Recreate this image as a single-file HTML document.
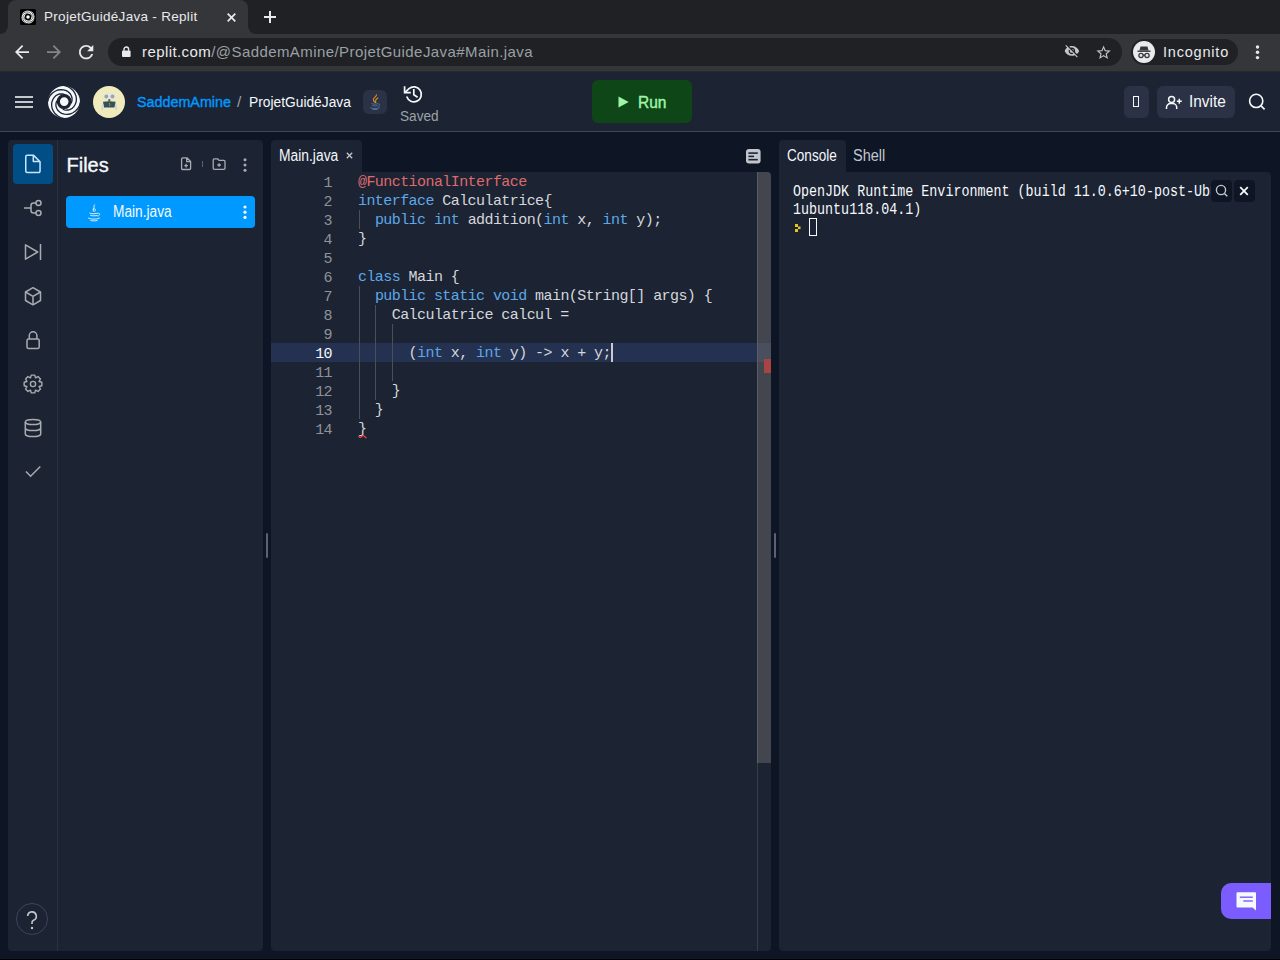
<!DOCTYPE html>
<html><head><meta charset="utf-8">
<style>
*{box-sizing:border-box;margin:0;padding:0}
html,body{width:1280px;height:960px;overflow:hidden;background:#000;font-family:"Liberation Sans",sans-serif}
.abs{position:absolute}
svg{position:absolute;overflow:visible}
.t{position:absolute;white-space:pre;line-height:1}
#chrome{position:absolute;left:0;top:0;width:1280px;height:71px;background:#202124}
#tab{position:absolute;left:8px;top:0;width:240px;height:34px;background:#35363a;border-radius:8px 8px 0 0}
#toolbar{position:absolute;left:0;top:34px;width:1280px;height:37px;background:#35363a}
#page{position:absolute;left:0;top:71px;width:1280px;height:888px;background:#0e1525}
#header{position:absolute;left:0;top:0;width:1280px;height:61px;background:#1c2333;border-bottom:1px solid #3c445c}
.panel{position:absolute;background:#1c2333;border-radius:4px;overflow:hidden}
.code{font-family:"Liberation Mono",monospace;font-size:14px}
#nums,#code{font-family:"Liberation Mono",monospace;font-size:15px;letter-spacing:-0.57px;line-height:19px;white-space:pre}
#nums{color:#8f9398}
#nums .act{color:#f5f9fc}
.ln{height:19px}
.an{color:#dd6b6b}.kw{color:#5ca8e8}.id{color:#d4d7db}
</style></head><body>
<div id="chrome">
  <div id="tab"></div>
  <!-- flares -->
  <svg style="left:0;top:26px" width="8" height="8"><path d="M0 8 H8 V0 A8 8 0 0 1 0 8Z" fill="#35363a"/></svg>
  <svg style="left:248px;top:26px" width="8" height="8"><path d="M0 0 V8 H8 A8 8 0 0 1 0 0Z" fill="#35363a"/></svg>
  <!-- favicon -->
  <svg style="left:20px;top:9px" width="16" height="16" viewBox="0 0 16 16"><rect width="16" height="16" rx="1.5" fill="#000"/><circle cx="8" cy="8" r="6.6" fill="#fff"/><circle cx="8" cy="7.9" r="2.5" fill="none" stroke="#000" stroke-width="1.5"/><path d="M1.20 8.00 1.76 6.23 2.75 4.76 4.05 3.69 5.52 3.06 7.02 2.88 8.43 3.12 9.63 3.72 10.55 4.58 11.13 5.60 11.38 6.66 11.30 7.66 10.95 8.52" fill="none" stroke="#000" stroke-width="0.6"/><path d="M8.00 1.20 9.77 1.76 11.24 2.75 12.31 4.05 12.94 5.52 13.12 7.02 12.88 8.43 12.28 9.63 11.42 10.55 10.40 11.13 9.34 11.38 8.34 11.30 7.48 10.95" fill="none" stroke="#000" stroke-width="0.6"/><path d="M14.80 8.00 14.24 9.77 13.25 11.24 11.95 12.31 10.48 12.94 8.98 13.12 7.57 12.88 6.37 12.28 5.45 11.42 4.87 10.40 4.62 9.34 4.70 8.34 5.05 7.48" fill="none" stroke="#000" stroke-width="0.6"/><path d="M8.00 14.80 6.23 14.24 4.76 13.25 3.69 11.95 3.06 10.48 2.88 8.98 3.12 7.57 3.72 6.37 4.58 5.45 5.60 4.87 6.66 4.62 7.66 4.70 8.52 5.05" fill="none" stroke="#000" stroke-width="0.6"/></svg>
  <div class="t" style="left:44px;top:10px;font-size:13.5px;color:#e8eaed;letter-spacing:0.3px">ProjetGuidéJava - Replit</div>
  <svg style="left:227px;top:12.5px" width="9" height="9" viewBox="0 0 9 9"><path d="M0.7 0.7 L8.3 8.3 M8.3 0.7 L0.7 8.3" stroke="#e8eaed" stroke-width="1.7"/></svg>
  <svg style="left:264px;top:11px" width="12" height="12" viewBox="0 0 12 12"><path d="M6 0 V12 M0 6 H12" stroke="#e8eaed" stroke-width="2"/></svg>
  <div id="toolbar">
    <!-- back -->
    <svg style="left:15px;top:11px" width="14" height="14" viewBox="0 0 16 16"><path d="M16 7H3.83l5.59-5.59L8 0 0 8l8 8 1.41-1.41L3.83 9H16z" fill="#e8eaed"/></svg>
    <svg style="left:47px;top:11px" width="14" height="14" viewBox="0 0 16 16"><path d="M0 7h12.17L6.58 1.41 8 0l8 8-8 8-1.41-1.41L12.17 9H0z" fill="#80868b"/></svg>
    <svg style="left:79px;top:10.8px" width="14.3" height="14.3" viewBox="4 4 16 16"><path d="M17.65 6.35A7.958 7.958 0 0 0 12 4c-4.42 0-7.99 3.58-7.99 8s3.57 8 7.990 8c3.73 0 6.84-2.55 7.73-6h-2.08A5.990 5.990 0 0 1 12 18c-3.31 0-6-2.69-6-6s2.69-6 6-6c1.66 0 3.14.69 4.22 1.78L13 11h7V4l-2.35 2.35z" fill="#e8eaed"/></svg>
    <div class="abs" style="left:108px;top:4px;width:1014px;height:28px;border-radius:14px;background:#202124"></div>
    <!-- lock -->
    <svg style="left:121.7px;top:12px" width="9" height="11" viewBox="0 0 9 11"><rect x="0" y="4.4" width="8.6" height="6.6" rx="1" fill="#e8eaed"/><path d="M2 4.8 V3.3 A2.3 2.3 0 0 1 6.6 3.3 V4.8" fill="none" stroke="#e8eaed" stroke-width="1.4"/></svg>
    <div class="t" style="left:142px;top:10px;font-size:15px;color:#9aa0a6;letter-spacing:0.42px"><span style="color:#e8eaed">replit.com</span>/@SaddemAmine/ProjetGuideJava#Main.java</div>
    <!-- eye slash -->
    <svg style="left:1064px;top:9.2px" width="15.8" height="15.8" viewBox="0 0 24 24"><path d="M12 7c2.76 0 5 2.24 5 5 0 .65-.13 1.26-.36 1.83l2.92 2.92c1.51-1.26 2.7-2.89 3.43-4.75-1.73-4.39-6-7.5-11-7.5-1.4 0-2.74.25-3.98.7l2.16 2.16C10.74 7.13 11.35 7 12 7zM2 4.27l2.28 2.28.46.46C3.08 8.3 1.780 10.02 1 12c1.73 4.39 6 7.5 11 7.5 1.55 0 3.03-.3 4.38-.84l.42.42L19.730 22 21 20.73 3.27 3 2 4.27zM7.53 9.8l1.55 1.55c-.05.21-.08.43-.08.65 0 1.66 1.34 3 3 3 .22 0 .44-.03.65-.08l1.55 1.55c-.67.33-1.41.53-2.2.53-2.76 0-5-2.24-5-5 0-.79.2-1.53.53-2.2zm4.31-.78l3.15 3.15.02-.16c0-1.66-1.34-3-3-3l-.17.01z" fill="#c4c7c5"/></svg>
    <!-- star -->
    <svg style="left:1095.4px;top:9.5px" width="17.2" height="17.2" viewBox="0 0 24 24"><path d="M22 9.24l-7.19-.62L12 2 9.19 8.63 2 9.24l5.46 4.73L5.82 21 12 17.27 18.18 21l-1.63-7.03L22 9.24zM12 15.4l-3.76 2.27 1-4.28-3.32-2.88 4.38-.38L12 6.1l1.710 4.04 4.38.38-3.32 2.88 1 4.28L12 15.4z" fill="#c4c7c5"/></svg>
    <div class="abs" style="left:1131px;top:5px;width:107px;height:26px;border-radius:13px;background:#202124"></div>
    <svg style="left:1133px;top:7px" width="22" height="22" viewBox="0 0 22 22"><circle cx="11" cy="11" r="11" fill="#e8eaed"/><path d="M7.5 5.5 H14.5 L15.5 9.5 H6.5Z" fill="#35363a"/><rect x="4.5" y="9.5" width="13" height="1.4" fill="#35363a"/><circle cx="8" cy="14.5" r="2.1" fill="none" stroke="#35363a" stroke-width="1.3"/><circle cx="14" cy="14.5" r="2.1" fill="none" stroke="#35363a" stroke-width="1.3"/><path d="M10 14.2 H12" stroke="#35363a" stroke-width="1.2"/></svg>
    <div class="t" style="left:1163px;top:10.8px;font-size:14.5px;color:#e8eaed;letter-spacing:0.8px">Incognito</div>
    <svg style="left:1255px;top:11px" width="5" height="15" viewBox="0 0 5 15"><circle cx="2.5" cy="2" r="1.7" fill="#e8eaed"/><circle cx="2.5" cy="7.3" r="1.7" fill="#e8eaed"/><circle cx="2.5" cy="12.6" r="1.7" fill="#e8eaed"/></svg>
  </div>
</div>
<div id="page"></div>
<div class="abs" style="left:0;top:71px;width:1280px;height:61px;background:#1c2333;border-bottom:1px solid #3c445c"></div>
<div class="abs" style="left:0;top:71px;width:1280px;height:1px;background:#27282c"></div>
<!-- HEADER -->
<svg style="left:15px;top:96px" width="18" height="12"><rect y="0" width="18" height="2" fill="#c2c8cc"/><rect y="5" width="18" height="2" fill="#c2c8cc"/><rect y="10" width="18" height="2" fill="#c2c8cc"/></svg>
<svg style="left:48px;top:86px" width="32" height="32" viewBox="0 0 32 32"><circle cx="16" cy="16" r="16" fill="#f5f9fc"/><circle cx="16.2" cy="15.6" r="5.9" fill="none" stroke="#1c2333" stroke-width="3.2"/><path d="M-0.5 16.0 0.5 12.5 2.2 9.5 4.5 7.0 7.1 5.2 10.0 4.0 12.9 3.6 15.7 3.8 18.3 4.7 20.4 6.0 22.2 7.7 23.3 9.7 24.0 11.7 24.1 13.8 23.8 15.6 23.1 17.3" fill="none" stroke="#1c2333" stroke-width="1.3"/><path d="M16.0 -0.5 19.5 0.5 22.5 2.2 25.0 4.5 26.8 7.1 28.0 10.0 28.4 12.9 28.2 15.7 27.3 18.3 26.0 20.4 24.3 22.2 22.3 23.3 20.3 24.0 18.2 24.1 16.4 23.8 14.7 23.1" fill="none" stroke="#1c2333" stroke-width="1.3"/><path d="M32.5 16.0 31.5 19.5 29.8 22.5 27.5 25.0 24.9 26.8 22.0 28.0 19.1 28.4 16.3 28.2 13.7 27.3 11.6 26.0 9.8 24.3 8.7 22.3 8.0 20.3 7.9 18.2 8.2 16.4 8.9 14.7" fill="none" stroke="#1c2333" stroke-width="1.3"/><path d="M16.0 32.5 12.5 31.5 9.5 29.8 7.0 27.5 5.2 24.9 4.0 22.0 3.6 19.1 3.8 16.3 4.7 13.7 6.0 11.6 7.7 9.8 9.7 8.7 11.7 8.0 13.8 7.9 15.6 8.2 17.3 8.9" fill="none" stroke="#1c2333" stroke-width="1.3"/></svg>
<svg style="left:93px;top:86px" width="32" height="32" viewBox="0 0 32 32">
  <circle cx="16" cy="16" r="16" fill="#efebbd"/>
  <rect x="10.2" y="7.6" width="12.4" height="5.8" rx="2.9" fill="#e3e6e6"/>
  <circle cx="13.3" cy="10.5" r="1.9" fill="#9ea3a6"/><circle cx="19.5" cy="10.5" r="1.9" fill="#9ea3a6"/>
  <path d="M10 15.8 Q16 14.8 22.6 15.8 L21.5 21.4 H11Z" fill="#34505f"/>
  <rect x="15.3" y="13.2" width="2" height="2.5" fill="#5c5848"/>
  <path d="M16.2 17 Q17.8 18.5 16.2 20" fill="none" stroke="#b8a030" stroke-width="0.9"/>
  <path d="M9.8 18.5 L9.2 24 M22.8 18.5 L23.3 24" stroke="#cfd5cf" stroke-width="1.8"/>
</svg>
<div class="t" style="left:137px;top:94.4px;font-size:15.5px;color:#0099ff;transform:scaleX(0.924);transform-origin:0 0;-webkit-text-stroke:0.4px #0099ff">SaddemAmine</div>
<div class="t" style="left:237px;top:94.4px;font-size:15.5px;color:#9da2a6">/</div>
<div class="t" style="left:248.5px;top:94.4px;font-size:15.5px;color:#f5f9fc;transform:scaleX(0.889);transform-origin:0 0">ProjetGuidéJava</div>
<div class="abs" style="left:363px;top:90px;width:24px;height:24px;border-radius:6px;background:#2b3245"></div>
<svg style="left:363px;top:90px" width="24" height="24" viewBox="0 0 24 24">
  <path d="M13.4 4.8 C13.8 6.5 10.2 7.6 10.3 9.8 C10.4 11 11.3 11.8 11.9 12.3 M14.8 8 C13.2 9 12.4 9.8 12.6 11 C12.7 11.6 12.9 12 12.8 12.5" fill="none" stroke="#e8961e" stroke-width="1.05" stroke-linecap="round"/>
  <path d="M8.6 13.6 C10 14.3 13.5 14.3 15 13.6 M9.2 15.5 C10.5 16 13 16 14.4 15.5 M7.2 17.6 C9.5 18.9 14.5 18.9 16.8 17.6 M15.4 13.8 C17.2 13.8 17 15.8 14.8 16.6 M9.5 19.4 C11 19.8 13 19.8 14.5 19.4" fill="none" stroke="#4f80ab" stroke-width="0.85"/>
</svg>
<svg style="left:400px;top:82px" width="26" height="24" viewBox="0 0 26 24">
  <path d="M6.7 14.6 A7.5 7.5 0 1 0 9 6.6 L4.8 10.6" fill="none" stroke="#f5f9fc" stroke-width="1.7"/>
  <path d="M4.6 4.2 V10.6 H10.8" fill="none" stroke="#f5f9fc" stroke-width="1.7"/>
  <path d="M13.8 7 V12.7 L17.6 15.2" fill="none" stroke="#f5f9fc" stroke-width="1.7"/>
</svg>
<div class="t" style="left:399.7px;top:107.9px;font-size:15.5px;color:#9da2a6;transform:scaleX(0.878);transform-origin:0 0">Saved</div>
<div class="abs" style="left:592px;top:80px;width:100px;height:43px;border-radius:6px;background:#0e4618"></div>
<svg style="left:617.5px;top:96px" width="11" height="12" viewBox="0 0 11 12"><path d="M0.5 0.5 L10.7 6 L0.5 11.5Z" fill="#9cf6a5"/></svg>
<div class="t" style="left:638px;top:94.4px;font-size:16.5px;color:#9cf6a5;transform:scaleX(0.94);transform-origin:0 0;-webkit-text-stroke:0.45px #9cf6a5">Run</div>
<div class="abs" style="left:1124px;top:86px;width:25px;height:32px;border-radius:6px;background:#2b3245"></div>
<div class="abs" style="left:1133px;top:96px;width:6px;height:11px;border:1.2px solid #f5f9fc"></div>
<div class="abs" style="left:1157px;top:86px;width:78px;height:32px;border-radius:6px;background:#2b3245"></div>
<svg style="left:1165px;top:95px" width="18" height="15" viewBox="0 0 18 15">
  <circle cx="6.6" cy="4.6" r="3" fill="none" stroke="#f5f9fc" stroke-width="1.5"/>
  <path d="M1.5 14 V12.5 A4 4 0 0 1 5.5 8.5 H7.7 A4 4 0 0 1 11.7 12.5 V14" fill="none" stroke="#f5f9fc" stroke-width="1.5"/>
  <path d="M14.3 3.8 V8.8 M11.8 6.3 H16.8" stroke="#f5f9fc" stroke-width="1.5"/>
</svg>
<div class="t" style="left:1188.7px;top:93.8px;font-size:15.6px;color:#f5f9fc;transform:scaleX(0.986);transform-origin:0 0">Invite</div>
<svg style="left:1248px;top:93px" width="18" height="18" viewBox="0 0 18 18"><circle cx="8.2" cy="7.9" r="6.6" fill="none" stroke="#f5f9fc" stroke-width="1.6"/><path d="M12.8 12.6 L16.6 16.4" stroke="#f5f9fc" stroke-width="1.6"/></svg>
<!-- SIDEBAR + FILES -->
<div class="panel" style="left:8px;top:140px;width:255px;height:811px"></div>
<div class="abs" style="left:57px;top:140px;width:1px;height:811px;background:#2b3245"></div>
<div class="abs" style="left:13px;top:144px;width:40px;height:40px;border-radius:4px;background:#004e85"></div>
<svg style="left:13px;top:144px" width="40" height="40" viewBox="0 0 40 40"><path d="M12.75 12.9 A1.55 1.55 0 0 1 14.3 11.35 H20.6 L27.05 17.8 V27 A1.55 1.55 0 0 1 25.5 28.55 H14.3 A1.55 1.55 0 0 1 12.75 27Z M20.3 11.8 V17.4 H26.6" fill="none" stroke="#c9e6ff" stroke-width="1.5" stroke-linejoin="round"/></svg>
<svg style="left:13px;top:188px" width="40" height="40" viewBox="0 0 40 40" fill="none" stroke="#a8acb0" stroke-width="1.5"><path d="M11 20 H18"/><path d="M23 15 H20.5 A2.5 2.5 0 0 0 18 17.5 V22.5 A2.5 2.5 0 0 0 20.5 25 H23"/><circle cx="25.5" cy="15" r="2.5"/><circle cx="25.5" cy="25" r="2.5"/></svg>
<svg style="left:13px;top:232px" width="40" height="40" viewBox="0 0 40 40" fill="none" stroke="#a8acb0" stroke-width="1.5" stroke-linejoin="round"><path d="M12.5 12.8 V27.2 L24.7 20Z"/><path d="M27.5 12 V28"/></svg>
<svg style="left:13px;top:276px" width="40" height="40" viewBox="0 0 40 40" fill="none" stroke="#a8acb0" stroke-width="1.5" stroke-linejoin="round"><path d="M20 11.7 L27.5 16 V24.5 L20 28.8 L12.5 24.5 V16Z"/><path d="M12.5 16 L20 20.3 L27.5 16 M20 20.3 V28.8"/></svg>
<svg style="left:13px;top:320px" width="40" height="40" viewBox="0 0 40 40" fill="none" stroke="#a8acb0" stroke-width="1.5"><rect x="14" y="19" width="12.2" height="9.6" rx="1.6"/><path d="M16.3 19 V15.6 A3.8 3.8 0 0 1 23.9 15.6 V19"/></svg>
<svg style="left:13px;top:364px" width="40" height="40" viewBox="0 0 40 40" fill="none" stroke="#a8acb0" stroke-width="1.4" stroke-linejoin="round"><path id="gear" d="M17.53 13.88 L18.28 11.17 L21.72 11.17 L22.47 13.88 L22.58 13.92 L25.03 12.54 L27.46 14.97 L26.08 17.42 L26.12 17.53 L28.83 18.28 L28.83 21.72 L26.12 22.47 L26.08 22.58 L27.46 25.03 L25.03 27.46 L22.58 26.08 L22.47 26.12 L21.72 28.83 L18.28 28.83 L17.53 26.12 L17.42 26.08 L14.97 27.46 L12.54 25.03 L13.92 22.58 L13.88 22.47 L11.17 21.72 L11.17 18.28 L13.88 17.53 L13.92 17.42 L12.54 14.97 L14.97 12.54 L17.42 13.92Z"/><circle cx="20" cy="20" r="2.6"/></svg>
<svg style="left:13px;top:408px" width="40" height="40" viewBox="0 0 40 40" fill="none" stroke="#a8acb0" stroke-width="1.5"><ellipse cx="20" cy="14" rx="7.7" ry="2.6"/><path d="M12.3 14 V26 A7.7 2.6 0 0 0 27.7 26 V14 M12.3 20 A7.7 2.6 0 0 0 27.7 20"/></svg>
<svg style="left:13px;top:452px" width="40" height="40" viewBox="0 0 40 40" fill="none" stroke="#a8acb0" stroke-width="1.5"><path d="M13 19.5 L17.6 24.2 L27.3 14.5"/></svg>
<div class="abs" style="left:16px;top:903px;width:32px;height:32px;border-radius:50%;border:1px solid #3c445c"></div>
<svg style="left:16px;top:903px" width="32" height="32" viewBox="0 0 32 32"><path d="M11.7 13 A4.3 4.3 0 1 1 17.5 17.2 C16.5 17.7 16 18.4 16 19.5 V21" fill="none" stroke="#c2c8cc" stroke-width="1.6"/><circle cx="16" cy="25" r="1.2" fill="#c2c8cc"/></svg>

<div class="t" style="left:66.5px;top:154.8px;font-size:20px;color:#f5f9fc;-webkit-text-stroke:0.35px #f5f9fc">Files</div>
<svg style="left:178px;top:155px" width="16" height="18" viewBox="0 0 16 18" fill="none" stroke="#a8acb0" stroke-width="1.3" stroke-linejoin="round"><path d="M3.6 3.9 A1.1 1.1 0 0 1 4.7 2.8 H8.9 L12.6 6.5 V13.4 A1.1 1.1 0 0 1 11.5 14.5 H4.7 A1.1 1.1 0 0 1 3.6 13.4Z M8.7 3 V6.7 H12.4"/><path d="M8.1 8.8 V12.4 M6.3 10.6 H9.9" stroke-width="1.3"/></svg>
<div class="abs" style="left:202px;top:161px;width:1px;height:6px;background:#5c6170"></div>
<svg style="left:210px;top:155px" width="18" height="18" viewBox="0 0 18 18" fill="none" stroke="#a8acb0" stroke-width="1.3" stroke-linejoin="round"><path d="M3.2 4.9 A1.1 1.1 0 0 1 4.3 3.8 H7.6 L9 5.4 H13.9 A1.1 1.1 0 0 1 15 6.5 V13.25 A1.1 1.1 0 0 1 13.9 14.35 H4.3 A1.1 1.1 0 0 1 3.2 13.25Z"/><path d="M9.1 8.2 V11.8 M7.3 10 H10.9" stroke-width="1.3"/></svg>
<svg style="left:242px;top:157px" width="6" height="16" viewBox="0 0 6 16"><circle cx="3" cy="2.7" r="1.5" fill="#a8acb0"/><circle cx="3" cy="8" r="1.5" fill="#a8acb0"/><circle cx="3" cy="13.3" r="1.5" fill="#a8acb0"/></svg>

<div class="abs" style="left:66px;top:196px;width:189px;height:32px;border-radius:4px;background:#0099ff"></div>
<svg style="left:86px;top:203px" width="16" height="19" viewBox="0 0 16 19" fill="none" stroke="#f5f9fc" stroke-width="0.9">
  <path d="M8.8 1.5 C6.5 3.5 9.5 4.5 7.4 7.4 M8 5 C6.2 6.3 7.8 7.3 7.3 8.6 M9.8 6 C8.8 7 9.6 7.8 8.5 8.8"/>
  <path d="M3.5 10 C5 11 10.5 11 12 10 M4.2 12.3 C5.8 13 10 13 11.5 12.3 M2.2 15 C5 16.5 11 16.5 13.8 15 M12.3 10.3 C14.5 10.4 14 12.3 11.5 13.2 M4.5 17.5 C7 18 9.5 18 11.5 17.4"/>
</svg>
<div class="t" style="left:113.3px;top:203.8px;font-size:15.6px;color:#f5f9fc;transform:scaleX(0.879);transform-origin:0 0">Main.java</div>
<svg style="left:242px;top:204px" width="6" height="16" viewBox="0 0 6 16"><circle cx="3" cy="3" r="1.6" fill="#f5f9fc"/><circle cx="3" cy="8.2" r="1.6" fill="#f5f9fc"/><circle cx="3" cy="13.4" r="1.6" fill="#f5f9fc"/></svg>

<div class="abs" style="left:266px;top:533px;width:2px;height:25px;border-radius:1px;background:#5c6178"></div>
<div class="abs" style="left:774px;top:533px;width:2px;height:25px;border-radius:1px;background:#5c6178"></div>

<!-- EDITOR -->
<div class="abs" style="left:271px;top:140px;width:91px;height:33px;border-radius:4px 4px 0 0;background:#1c2333"></div>
<div class="t" style="left:278.5px;top:147.8px;font-size:15.6px;color:#f5f9fc;transform:scaleX(0.888);transform-origin:0 0">Main.java</div>
<svg style="left:346px;top:152px" width="7" height="7" viewBox="0 0 7 7"><path d="M0.8 0.8 L6.2 6.2 M6.2 0.8 L0.8 6.2" stroke="#c2c8cc" stroke-width="1.3"/></svg>
<svg style="left:745.5px;top:148.5px" width="15" height="15" viewBox="0 0 15 15"><rect x="0" y="0" width="14.6" height="14.6" rx="3" fill="#c2c6cc"/><rect x="2.4" y="3.3" width="9.4" height="1.6" fill="#1c2333"/><rect x="2.4" y="6.6" width="5.6" height="1.6" fill="#1c2333"/><rect x="2.4" y="9.9" width="9.4" height="1.6" fill="#1c2333"/></svg>
<div class="abs" style="left:271px;top:172px;width:500px;height:779px;border-radius:0 4px 4px 4px;background:#1c2333;overflow:hidden">
  <div class="abs" style="left:0;top:171px;width:500px;height:19px;background:#243150"></div>
  <div class="abs" style="left:0;top:1.8px;width:61px;text-align:right" id="nums"><div class="ln">1</div><div class="ln">2</div><div class="ln">3</div><div class="ln">4</div><div class="ln">5</div><div class="ln">6</div><div class="ln">7</div><div class="ln">8</div><div class="ln">9</div><div class="ln act">10</div><div class="ln">11</div><div class="ln">12</div><div class="ln">13</div><div class="ln">14</div></div>
  <div class="abs" style="left:87px;top:0.8px" id="code"><div class="ln"><span class="an">@FunctionalInterface</span></div><div class="ln"><span class="kw">interface</span><span class="id"> Calculatrice{</span></div><div class="ln"><span class="id">  </span><span class="kw">public</span><span class="id"> </span><span class="kw">int</span><span class="id"> addition(</span><span class="kw">int</span><span class="id"> x, </span><span class="kw">int</span><span class="id"> y);</span></div><div class="ln"><span class="id">}</span></div><div class="ln"></div><div class="ln"><span class="kw">class</span><span class="id"> Main {</span></div><div class="ln"><span class="id">  </span><span class="kw">public</span><span class="id"> </span><span class="kw">static</span><span class="id"> </span><span class="kw">void</span><span class="id"> main(String[] args) {</span></div><div class="ln"><span class="id">    Calculatrice calcul =</span></div><div class="ln"></div><div class="ln"><span class="id">      (</span><span class="kw">int</span><span class="id"> x, </span><span class="kw">int</span><span class="id"> y) -&gt; x + y;</span></div><div class="ln"></div><div class="ln"><span class="id">    }</span></div><div class="ln"><span class="id">  }</span></div><div class="ln"><span class="id">}</span></div></div>
  <div class="abs" style="left:87.5px;top:38px;width:1px;height:19px;background:#4a4f5c"></div>
  <div class="abs" style="left:87.5px;top:114px;width:1px;height:133px;background:#4a4f5c"></div>
  <div class="abs" style="left:104.4px;top:133px;width:1px;height:95px;background:#4a4f5c"></div>
  <div class="abs" style="left:121.3px;top:152px;width:1px;height:57px;background:#4a4f5c"></div>
  <div class="abs" style="left:340px;top:171px;width:2px;height:19px;background:#c8cacc"></div>
  <svg style="left:87px;top:262px" width="9" height="5" viewBox="0 0 9 5"><path d="M0.8 2.3 Q1.8 4.2 3.2 3 L4.6 1.8 Q5.3 1.2 6 1.9 L8 3.8" fill="none" stroke="#ee4444" stroke-width="1.25" stroke-linecap="round"/></svg>
  <div class="abs" style="left:486px;top:0;width:1px;height:779px;background:#353b48"></div>
  <div class="abs" style="left:486px;top:0;width:14px;height:591px;background:#43464f;border-left:1px solid #5b5e66"></div>
  <div class="abs" style="left:487px;top:171px;width:13px;height:19px;background:#4a4f60"></div>
  <div class="abs" style="left:493px;top:187px;width:7px;height:14px;background:#a84444"></div>
</div>

<!-- CONSOLE -->
<div class="abs" style="left:779px;top:140px;width:67px;height:33px;border-radius:4px 4px 0 0;background:#1c2333"></div>
<div class="t" style="left:787.2px;top:147.8px;font-size:15.6px;color:#f5f9fc;transform:scaleX(0.87);transform-origin:0 0">Console</div>
<div class="t" style="left:853px;top:147.8px;font-size:15.6px;color:#c2c8cc;transform:scaleX(0.928);transform-origin:0 0">Shell</div>
<div class="abs" style="left:779px;top:172px;width:492px;height:779px;border-radius:0 4px 4px 4px;background:#1c2333;overflow:hidden">
  <div class="abs" style="left:14px;top:10.5px;width:418px;height:40px;overflow:hidden"><div style="transform:scaleX(0.81);transform-origin:0 0;font-family:'Liberation Mono',monospace;font-size:16.5px;line-height:18px;color:#f5f9fc;white-space:pre">OpenJDK Runtime Environment (build 11.0.6+10-post-Ubuntu-
1ubuntu118.04.1)</div></div>
  <svg style="left:16px;top:52px" width="6" height="8" viewBox="0 0 6 8"><rect x="0" y="0" width="3" height="3" fill="#e8c41a"/><rect x="3" y="2.5" width="2.5" height="2.6" fill="#e8c41a"/><rect x="0" y="5" width="3" height="3" fill="#e8c41a"/></svg>
  <div class="abs" style="left:29.8px;top:46px;width:8.4px;height:18px;border:1.5px solid #f5f9fc"></div>
  <div class="abs" style="left:432px;top:8px;width:21px;height:21.6px;border-radius:4px;background:#0e1525"></div>
  <svg style="left:436px;top:12px" width="14" height="14" viewBox="0 0 14 14"><circle cx="6" cy="6" r="4.6" fill="none" stroke="#c2c8cc" stroke-width="1.4"/><path d="M9.4 9.4 L12.3 12.3" stroke="#c2c8cc" stroke-width="1.4"/></svg>
  <div class="abs" style="left:454.6px;top:8px;width:21px;height:21.6px;border-radius:4px;background:#0e1525"></div>
  <svg style="left:460px;top:13.8px" width="10" height="10" viewBox="0 0 10 10"><path d="M1.2 1.2 L8.8 8.8 M8.8 1.2 L1.2 8.8" stroke="#f5f9fc" stroke-width="1.8"/></svg>
  <div class="abs" style="left:442px;top:711px;width:50px;height:36px;border-radius:10px 0 0 10px;background:#7b5cff"></div>
  <svg style="left:456px;top:719px" width="22" height="22" viewBox="0 0 22 22"><path d="M1.5 2.2 A1 1 0 0 1 2.5 1.2 H20 A1 1 0 0 1 21 2.2 V19.5 L17.6 16.5 H2.5 A1 1 0 0 1 1.5 15.5Z" fill="#f5f9fc"/><rect x="4.8" y="5.5" width="13" height="1.4" fill="#7b5cff"/><rect x="8.3" y="9.3" width="9.5" height="1.4" fill="#7b5cff"/></svg>
</div>
</body></html>
